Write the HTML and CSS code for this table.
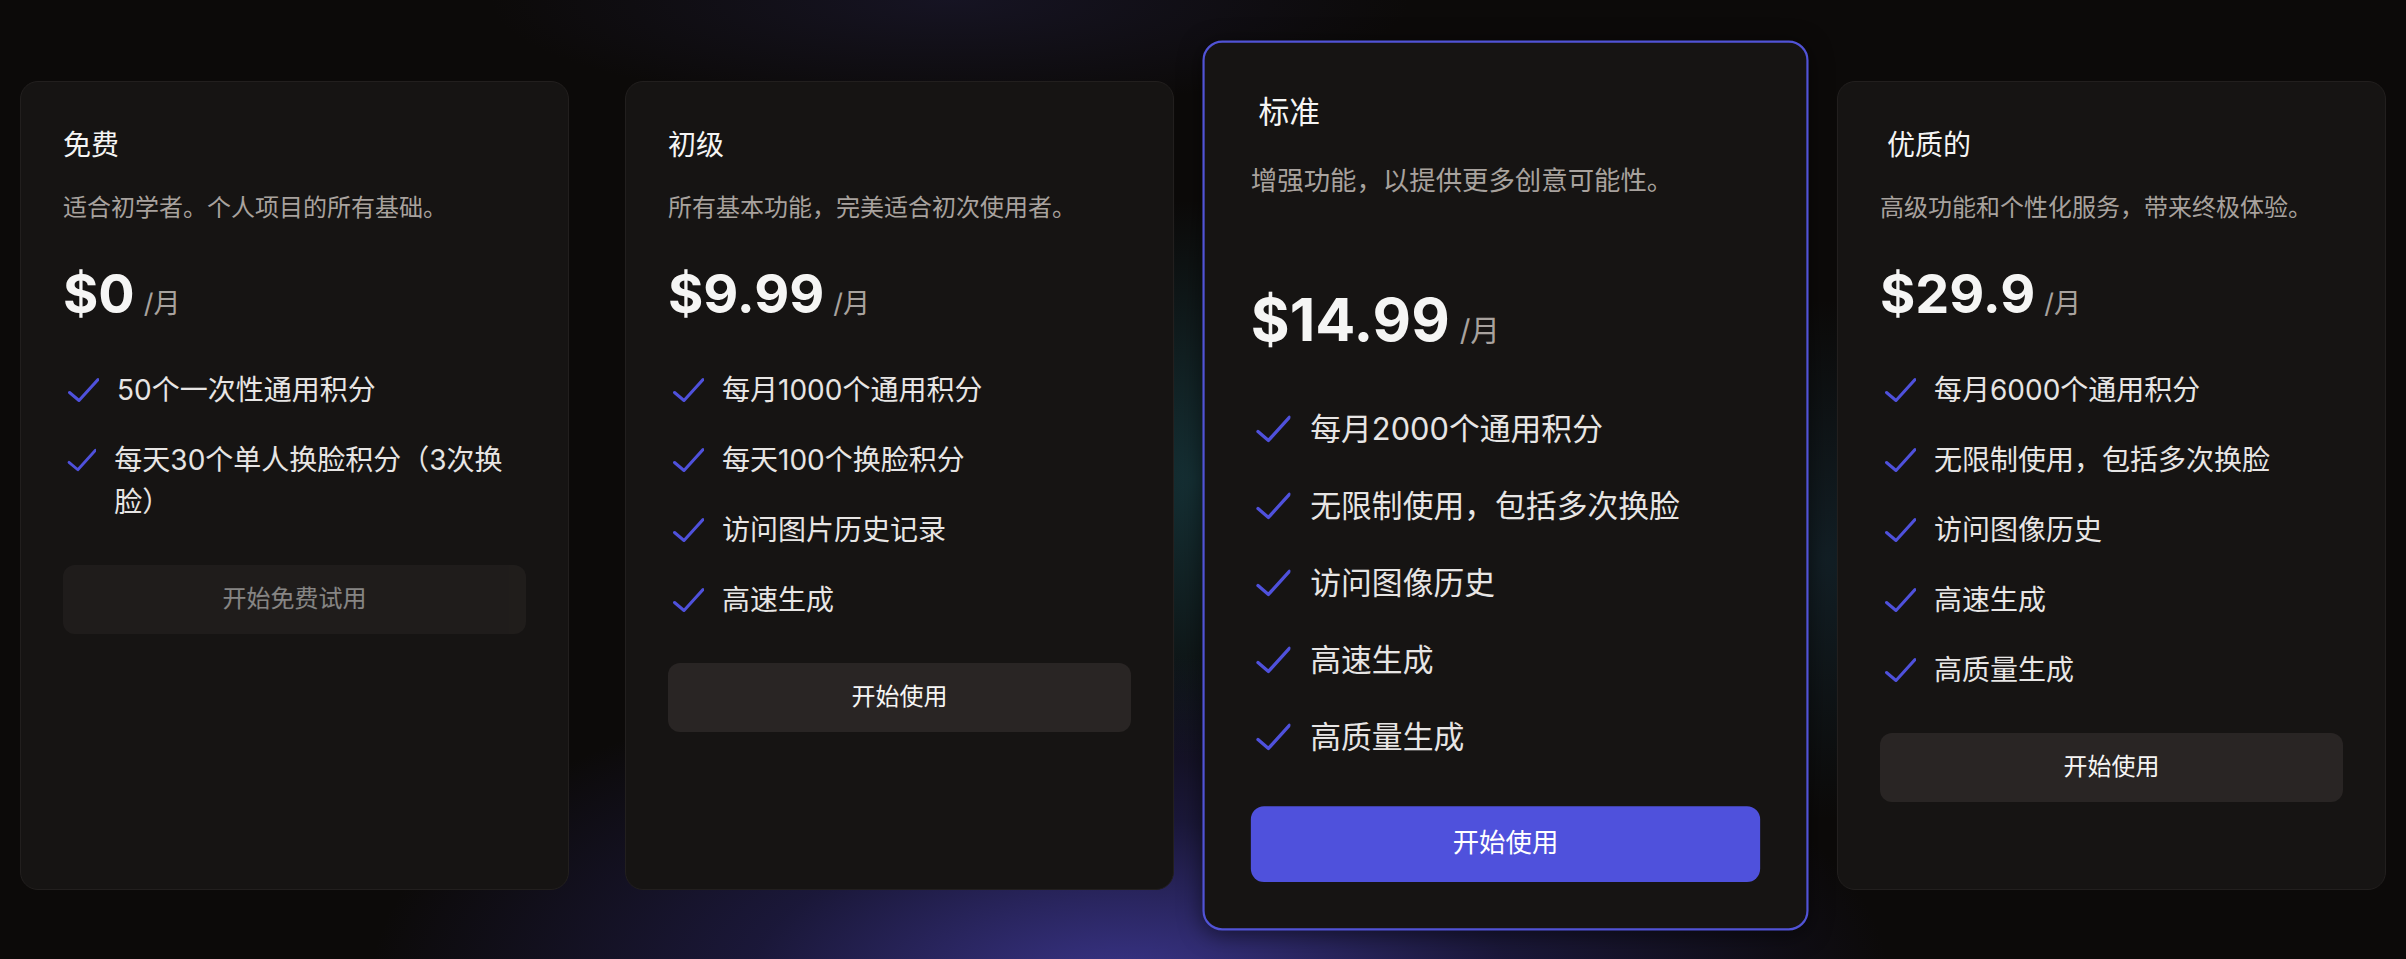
FILE: index.html
```html
<!DOCTYPE html>
<html lang="zh-CN">
<head>
<meta charset="utf-8">
<title>价格方案</title>
<link rel="stylesheet" href="styles.css">
</head>
<body>
<main class="pricing">
  <div class="card">
    <h3 class="plan-name">免费</h3>
    <p class="plan-desc">适合初学者。个人项目的所有基础。</p>
    <div class="price"><span class="amount">$0</span><span class="period">/月</span></div>
    <ul class="features">
      <li><svg class="check" viewBox="0 0 36 36"><path d="M6.5 20.5 16 28.5 35 7.5"/></svg><span>50个一次性通用积分</span></li>
      <li><svg class="check" viewBox="0 0 36 36"><path d="M6.5 20.5 16 28.5 35 7.5"/></svg><span>每天30个单人换脸积分（3次换脸）</span></li>
    </ul>
    <button class="btn btn-disabled">开始免费试用</button>
  </div>

  <div class="card">
    <h3 class="plan-name">初级</h3>
    <p class="plan-desc">所有基本功能，完美适合初次使用者。</p>
    <div class="price"><span class="amount">$9.99</span><span class="period">/月</span></div>
    <ul class="features">
      <li><svg class="check" viewBox="0 0 36 36"><path d="M6.5 20.5 16 28.5 35 7.5"/></svg><span>每月1000个通用积分</span></li>
      <li><svg class="check" viewBox="0 0 36 36"><path d="M6.5 20.5 16 28.5 35 7.5"/></svg><span>每天100个换脸积分</span></li>
      <li><svg class="check" viewBox="0 0 36 36"><path d="M6.5 20.5 16 28.5 35 7.5"/></svg><span>访问图片历史记录</span></li>
      <li><svg class="check" viewBox="0 0 36 36"><path d="M6.5 20.5 16 28.5 35 7.5"/></svg><span>高速生成</span></li>
    </ul>
    <button class="btn">开始使用</button>
  </div>

  <div class="card card-featured">
    <h3 class="plan-name plan-name-indent">标准</h3>
    <p class="plan-desc">增强功能，以提供更多创意可能性。</p>
    <div class="price"><span class="amount">$14.99</span><span class="period">/月</span></div>
    <ul class="features">
      <li><svg class="check" viewBox="0 0 36 36"><path d="M6.5 20.5 16 28.5 35 7.5"/></svg><span>每月2000个通用积分</span></li>
      <li><svg class="check" viewBox="0 0 36 36"><path d="M6.5 20.5 16 28.5 35 7.5"/></svg><span>无限制使用，包括多次换脸</span></li>
      <li><svg class="check" viewBox="0 0 36 36"><path d="M6.5 20.5 16 28.5 35 7.5"/></svg><span>访问图像历史</span></li>
      <li><svg class="check" viewBox="0 0 36 36"><path d="M6.5 20.5 16 28.5 35 7.5"/></svg><span>高速生成</span></li>
      <li><svg class="check" viewBox="0 0 36 36"><path d="M6.5 20.5 16 28.5 35 7.5"/></svg><span>高质量生成</span></li>
    </ul>
    <button class="btn btn-primary">开始使用</button>
  </div>

  <div class="card">
    <h3 class="plan-name plan-name-indent">优质的</h3>
    <p class="plan-desc">高级功能和个性化服务，带来终极体验。</p>
    <div class="price"><span class="amount">$29.9</span><span class="period">/月</span></div>
    <ul class="features">
      <li><svg class="check" viewBox="0 0 36 36"><path d="M6.5 20.5 16 28.5 35 7.5"/></svg><span>每月6000个通用积分</span></li>
      <li><svg class="check" viewBox="0 0 36 36"><path d="M6.5 20.5 16 28.5 35 7.5"/></svg><span>无限制使用，包括多次换脸</span></li>
      <li><svg class="check" viewBox="0 0 36 36"><path d="M6.5 20.5 16 28.5 35 7.5"/></svg><span>访问图像历史</span></li>
      <li><svg class="check" viewBox="0 0 36 36"><path d="M6.5 20.5 16 28.5 35 7.5"/></svg><span>高速生成</span></li>
      <li><svg class="check" viewBox="0 0 36 36"><path d="M6.5 20.5 16 28.5 35 7.5"/></svg><span>高质量生成</span></li>
    </ul>
    <button class="btn">开始使用</button>
  </div>
</main>
</body>
</html>
```

FILE: styles.css
```css
* {
  box-sizing: border-box;
  margin: 0;
  padding: 0;
}

html, body {
  height: 100%;
}

body {
  min-height: 959px;
  overflow: hidden;
  font-family: Inter, "Noto Sans CJK SC", sans-serif;
  color: #f5f5f4;
  background:
    radial-gradient(ellipse 760px 330px at 1130px 985px, rgba(66, 60, 160, 0.85), rgba(44, 40, 115, 0.45) 50%, transparent 100%),
    radial-gradient(ellipse 230px 280px at 1195px 480px, rgba(30, 85, 95, 0.5), transparent 100%),
    radial-gradient(ellipse 160px 260px at 1825px 560px, rgba(30, 70, 90, 0.35), transparent 100%),
    radial-gradient(ellipse 460px 110px at 950px 0px, rgba(45, 42, 95, 0.3), transparent 100%),
    #0c0a09;
}

.pricing {
  display: flex;
  align-items: stretch;
  gap: 56px;
  padding: 81px 20px 0;
}

.card {
  flex: 1 1 0;
  min-width: 0;
  display: flex;
  flex-direction: column;
  align-items: stretch;
  padding: 42px;
  background: #161413;
  border: 1px solid #221f1e;
  border-radius: 18px;
}

.card-featured {
  border: 2px solid #5153d6;
  transform: scale(1.1);
  box-shadow: 0 4px 20px rgba(0, 0, 0, 0.5);
}

.plan-name {
  font-size: 28px;
  line-height: 42px;
  font-weight: 400;
  color: #f5f5f4;
}

.plan-name-indent {
  padding-left: 7px;
}

.plan-desc {
  margin-top: 24px;
  font-size: 24px;
  line-height: 36px;
  color: #a8a29e;
  white-space: nowrap;
}

.price {
  display: flex;
  align-items: baseline;
  margin-top: 38px;
}

.card-featured .price {
  margin-top: 78px;
}

.amount {
  font-size: 54px;
  line-height: 60px;
  font-weight: 700;
  color: #f5f5f4;
}

.period {
  margin-left: 9px;
  font-size: 27px;
  line-height: 42px;
  color: #a8a29e;
}

.features {
  list-style: none;
  margin-top: 44px;
  display: flex;
  flex-direction: column;
  gap: 28px;
}

.card-featured .features {
  margin-top: 47px;
}

.features li {
  display: flex;
  align-items: flex-start;
  gap: 18px;
  font-size: 28px;
  line-height: 42px;
  color: #e7e5e4;
}

.check {
  width: 36px;
  height: 42px;
  fill: none;
  stroke: #4f51dc;
  stroke-width: 3;
  stroke-linecap: round;
  stroke-linejoin: round;
}

.btn {
  margin-top: 42px;
  width: 100%;
  padding: 16px 0 17px;
  border: none;
  border-radius: 12px;
  background: #292524;
  color: #f5f5f4;
  font-family: Inter, "Noto Sans CJK SC", sans-serif;
  font-size: 24px;
  line-height: 36px;
  font-weight: 400;
}

.btn-disabled {
  opacity: 0.5;
}

.btn-primary {
  background: #4f51dc;
  color: #ffffff;
}
```
